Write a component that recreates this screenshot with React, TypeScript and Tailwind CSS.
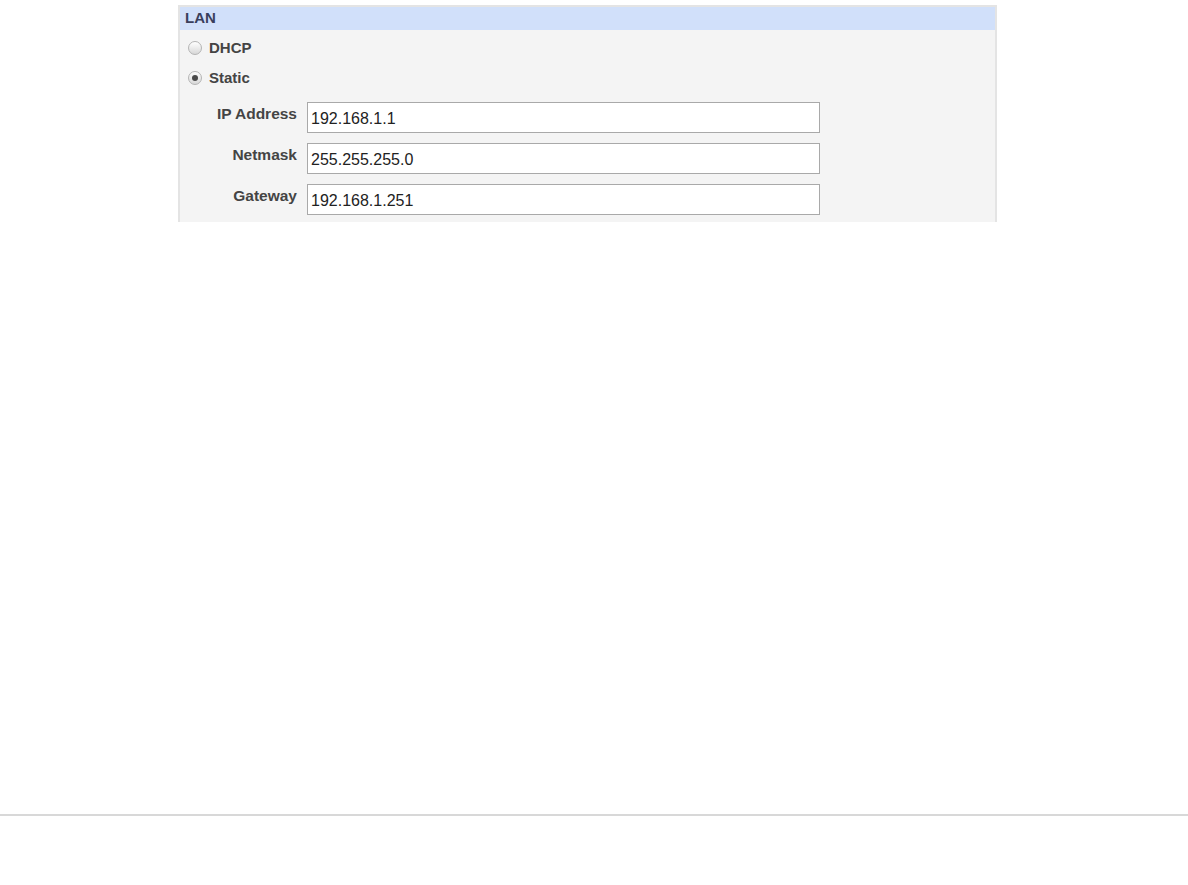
import { useState } from "react";

const fields = [
  { label: "IP Address", value: "192.168.1.1" },
  { label: "Netmask", value: "255.255.255.0" },
  { label: "Gateway", value: "192.168.1.251" },
];

function Radio({ checked }: { checked: boolean }) {
  return (
    <span className="flex h-[14px] w-[14px] items-center justify-center rounded-full border border-[#b4b4b4] bg-gradient-to-b from-white to-[#d8d8d8]">
      {checked && (
        <span className="h-[6px] w-[6px] rounded-full bg-[#4a4a4a]" />
      )}
    </span>
  );
}

export default function App() {
  const [mode, setMode] = useState("static");

  return (
    <div className="h-[885px] w-full bg-white pt-[5px] font-['Liberation_Sans',Arial,sans-serif]">
      {/* LAN panel */}
      <div className="ml-[178px] h-[217px] w-[819px] overflow-hidden border-x-2 border-t-2 border-[#e4e4e4] bg-[#f4f4f4]">
        <div className="flex h-[23px] items-center bg-[#d1e0fa] pl-[5px] text-[15px] font-bold text-[#3a3f5c]">
          LAN
        </div>

        <div className="pt-[3px]">
          {["dhcp", "static"].map((m) => (
            <label
              key={m}
              onClick={() => setMode(m)}
              className="flex h-[30px] cursor-pointer items-center gap-[7px] pl-[8px] text-[15px] font-bold text-[#444]"
            >
              <Radio checked={mode === m} />
              {m === "dhcp" ? "DHCP" : "Static"}
            </label>
          ))}
        </div>

        <div className="mt-[9px] flex flex-col gap-[10px]">
          {fields.map((f) => (
            <div key={f.label} className="flex items-start gap-[10px]">
              <span className="mt-[3px] w-[117px] text-right text-[15.5px] font-bold leading-[18px] text-[#444]">
                {f.label}
              </span>
              <input
                defaultValue={f.value}
                className="h-[31px] w-[513px] border border-[#a9a9a9] bg-white px-[3px] pt-[2px] text-[16px] text-[#222] outline-none"
              />
            </div>
          ))}
        </div>
      </div>

      {/* footer rule */}
      <div className="mt-[592px] h-[2px] w-full bg-[#d8d8d8]" />
    </div>
  );
}
